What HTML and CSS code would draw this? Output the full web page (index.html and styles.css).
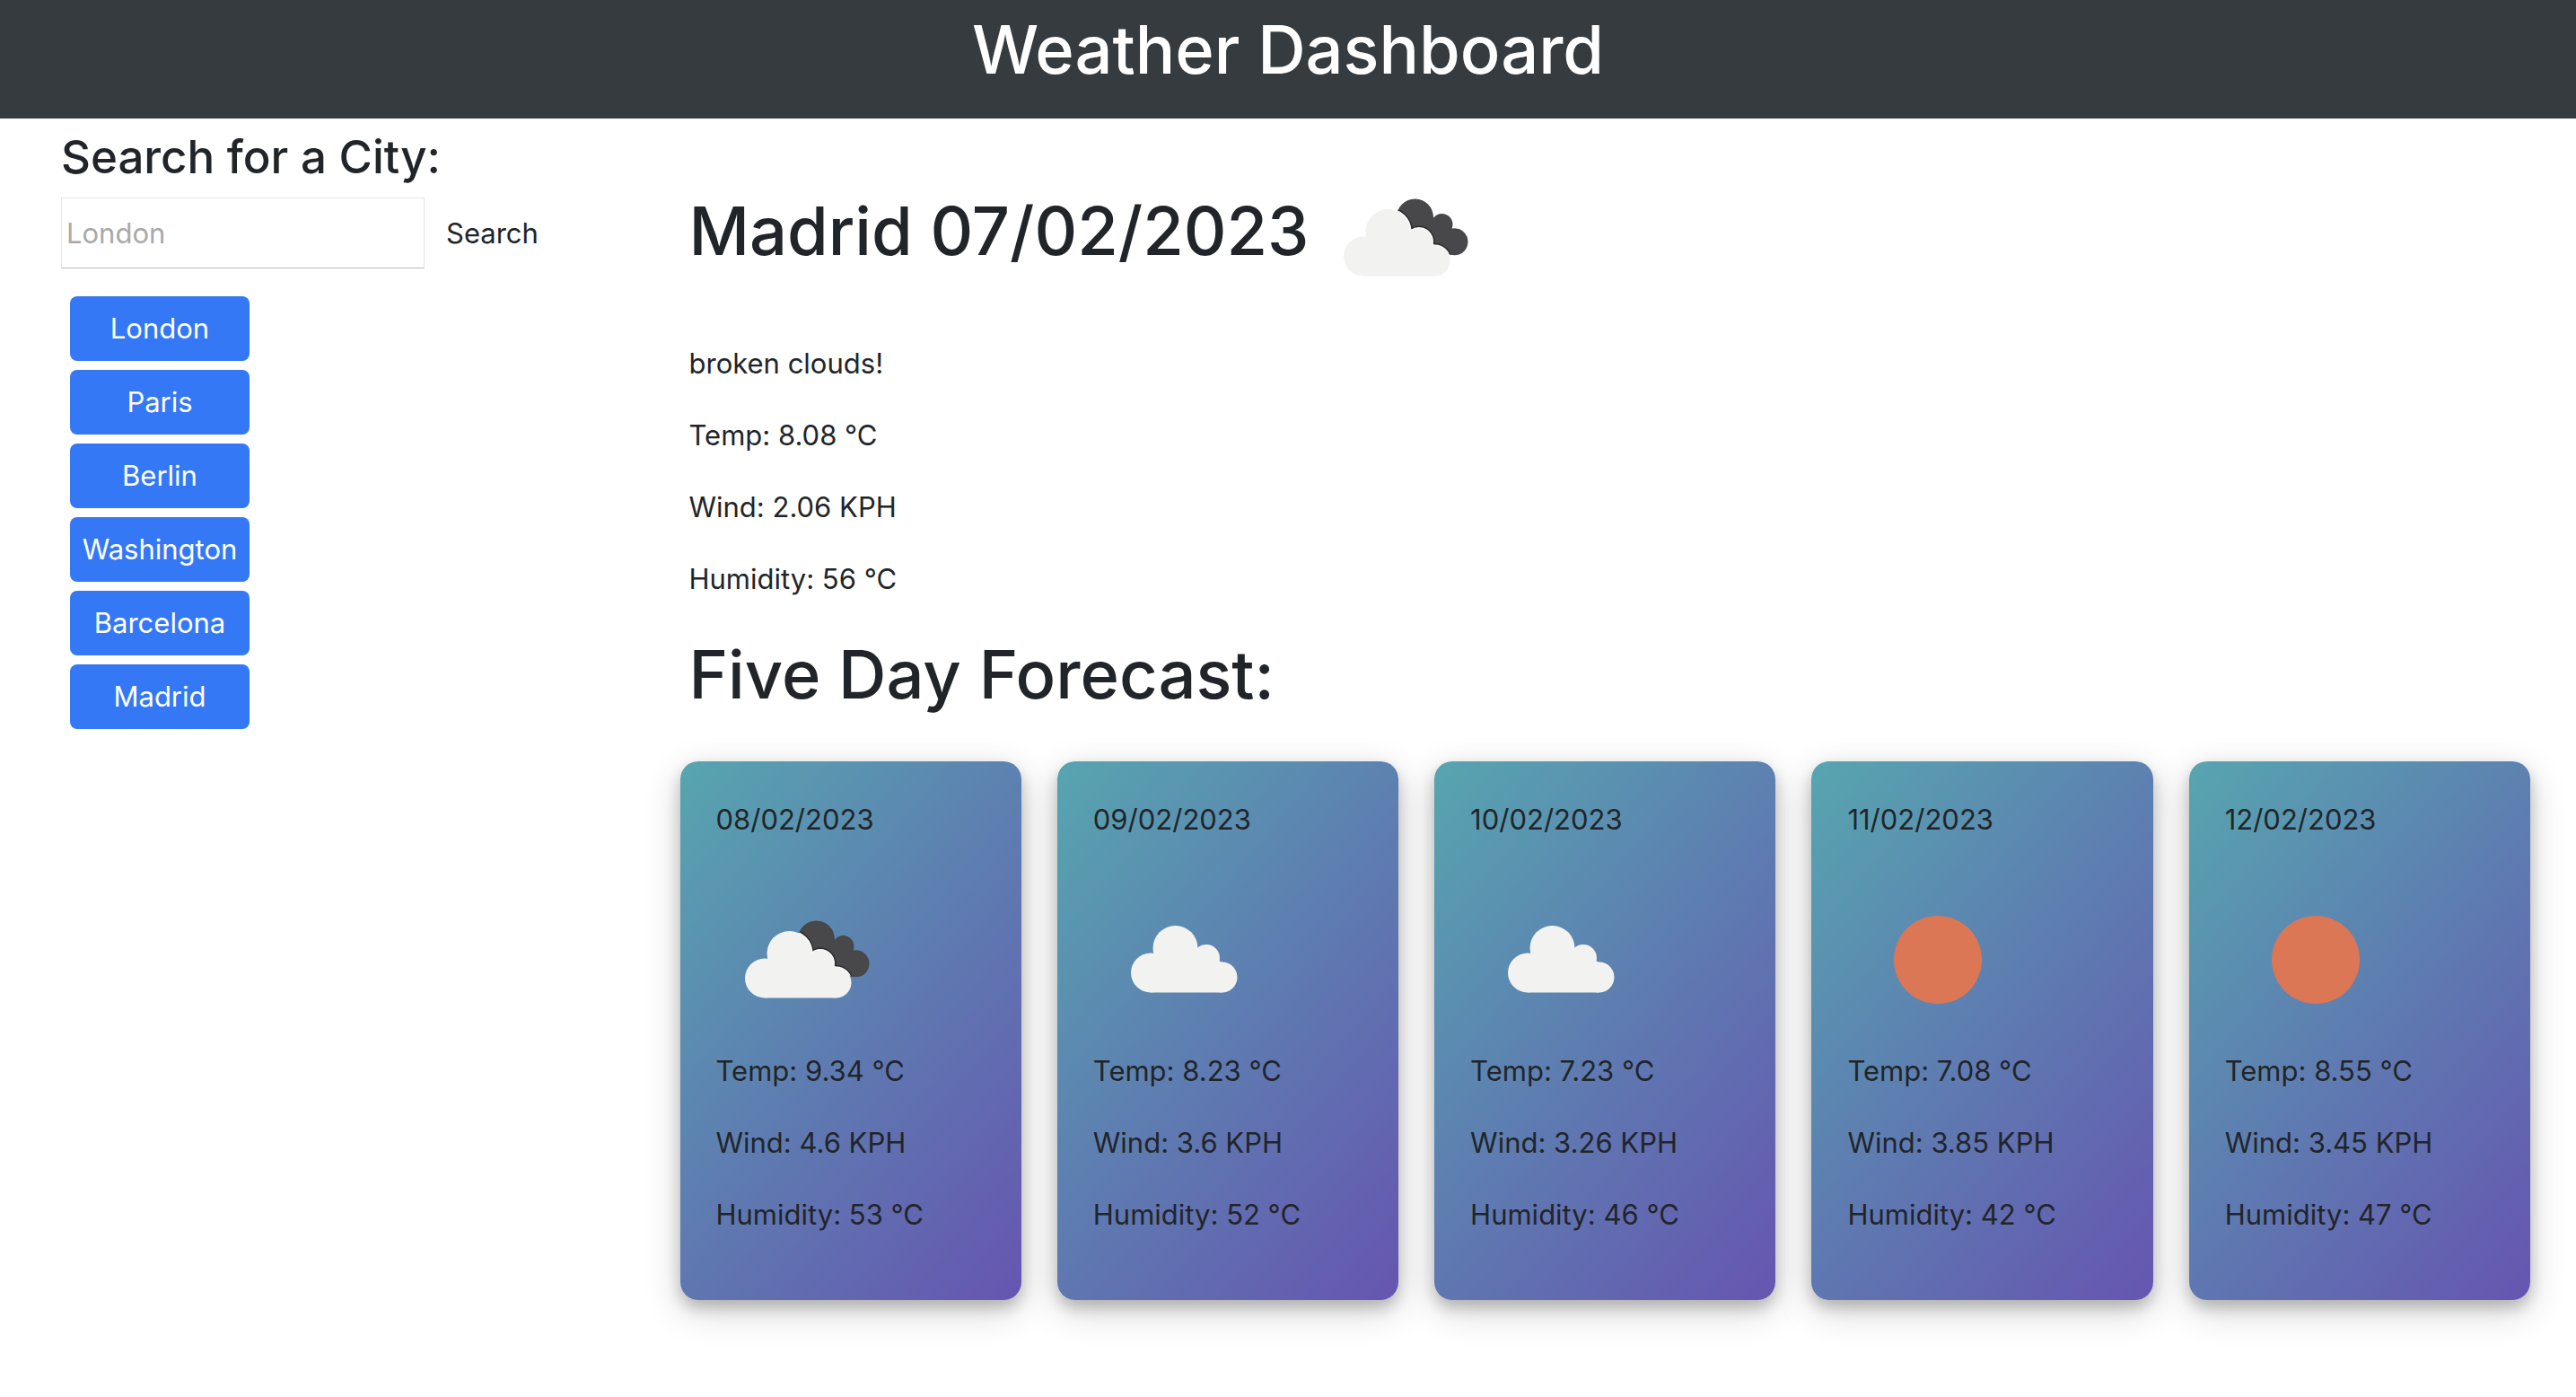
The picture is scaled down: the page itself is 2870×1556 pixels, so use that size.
FILE: index.html
```html
<!DOCTYPE html>
<html lang="en">
<head>
  <meta charset="utf-8">
  <title>Weather Dashboard</title>
  <meta name="viewport" content="width=device-width, initial-scale=1">
  <link rel="stylesheet" href="styles.css">
</head>
<body>
  <svg class="sprite" aria-hidden="true">
    <defs>
      <g id="cloud-shape">
        <circle cx="53" cy="121.5" r="22"/>
        <circle cx="80.5" cy="94" r="25"/>
        <circle cx="115" cy="105" r="15"/>
        <circle cx="132.5" cy="126.5" r="17"/>
        <path d="M53 143.500H132.500V110L104 94L80 90L57 100Z"/>
      </g>
      <clipPath id="back-clip">
        <circle cx="110.500" cy="78" r="20.500"/>
        <circle cx="140.500" cy="86" r="12"/>
        <circle cx="154.500" cy="105.300" r="15"/>
        <path d="M92 70L128 78L152 92L154 120L120 108Z"/>
      </clipPath>
      <symbol id="icon-broken" viewBox="-1 0 200 200">
        <g clip-path="url(#back-clip)">
          <rect width="200" height="200" fill="#48484a"/>
          <use href="#cloud-shape" fill="#2b2b2d" stroke="#2b2b2d" stroke-width="5"/>
          <use href="#cloud-shape" fill="#fff" stroke="#fff" stroke-width="2"/>
        </g>
        <use href="#cloud-shape" fill="#f2f2f0"/>
      </symbol>
      <symbol id="icon-cloud" viewBox="0 0 200 200">
        <use href="#cloud-shape" x="11" y="-6" fill="#f2f2f0"/>
      </symbol>
      <symbol id="icon-sun" viewBox="0 0 200 200">
        <circle cx="101" cy="101" r="49" fill="#dc7755"/>
      </symbol>
    </defs>
  </svg>

  <header class="header">
    <h1 class="title">Weather Dashboard</h1>
  </header>

  <main class="layout">
    <aside class="sidebar">
      <form class="search">
        <h2 class="search-title"><label for="city">Search for a City:</label></h2>
        <div class="search-row">
          <input class="search-input" id="city" type="text" placeholder="London">
          <button class="search-button" type="button">Search</button>
        </div>
      </form>
      <div class="history">
        <button class="city" type="button">London</button>
        <button class="city" type="button">Paris</button>
        <button class="city" type="button">Berlin</button>
        <button class="city" type="button">Washington</button>
        <button class="city" type="button">Barcelona</button>
        <button class="city" type="button">Madrid</button>
      </div>
    </aside>

    <div class="content">
      <section class="today">
        <h2 class="heading today-heading">Madrid 07/02/2023<svg class="icon" role="img" aria-label="Broken clouds"><use href="#icon-broken"/></svg></h2>
        <p>broken clouds!</p>
        <p>Temp: 8.08 °C</p>
        <p>Wind: 2.06 KPH</p>
        <p>Humidity: 56 °C</p>
        <h2 class="heading">Five Day Forecast:</h2>
      </section>
      <section class="forecast">
        <article class="card">
          <p>08/02/2023</p>
          <svg class="icon" role="img" aria-label="Broken clouds"><use href="#icon-broken"/></svg>
          <p>Temp: 9.34 °C</p>
          <p>Wind: 4.6 KPH</p>
          <p>Humidity: 53 °C</p>
        </article>
        <article class="card">
          <p>09/02/2023</p>
          <svg class="icon" role="img" aria-label="Clouds"><use href="#icon-cloud"/></svg>
          <p>Temp: 8.23 °C</p>
          <p>Wind: 3.6 KPH</p>
          <p>Humidity: 52 °C</p>
        </article>
        <article class="card">
          <p>10/02/2023</p>
          <svg class="icon" role="img" aria-label="Clouds"><use href="#icon-cloud"/></svg>
          <p>Temp: 7.23 °C</p>
          <p>Wind: 3.26 KPH</p>
          <p>Humidity: 46 °C</p>
        </article>
        <article class="card">
          <p>11/02/2023</p>
          <svg class="icon" role="img" aria-label="Clear sky"><use href="#icon-sun"/></svg>
          <p>Temp: 7.08 °C</p>
          <p>Wind: 3.85 KPH</p>
          <p>Humidity: 42 °C</p>
        </article>
        <article class="card">
          <p>12/02/2023</p>
          <svg class="icon" role="img" aria-label="Clear sky"><use href="#icon-sun"/></svg>
          <p>Temp: 8.55 °C</p>
          <p>Wind: 3.45 KPH</p>
          <p>Humidity: 47 °C</p>
        </article>
      </section>
    </div>
  </main>
</body>
</html>
```
FILE: styles.css
```css
* {
  box-sizing: border-box;
}

body {
  margin: 0;
  min-height: 100vh;
  background: #fff;
  color: #212529;
  font: 400 31px/50px Inter, "Liberation Sans", sans-serif;
}

h1, h2, p {
  margin: 0;
}

button, input {
  font: inherit;
  color: inherit;
}

.sprite {
  display: block;
  width: 0;
  height: 0;
}

.header {
  padding: 4px 0 26px;
  background: #363b3f;
  color: #fff;
  text-align: center;
}

.title,
.heading {
  font-size: 74px;
  line-height: 102px;
  font-weight: 500;
}

.layout {
  display: grid;
  grid-template-columns: 1fr 3fr;
}

.sidebar {
  padding: 8px 20px 0 68px;
}

.search-title {
  margin-bottom: 10px;
  font-size: 51px;
  line-height: 70px;
  font-weight: 500;
}

.search-row {
  display: flex;
  align-items: center;
}

.search-input {
  width: 405px;
  height: 79px;
  padding: 2px 5px;
  border: 1px solid #e6e6e6;
  border-bottom: 1px solid #b8b8b8;
  background: #fff;
}

.search-input::placeholder {
  color: #a9a9a9;
  opacity: 1;
}

.search-button {
  padding: 12px 24px;
  border: 0;
  background: none;
}

.history {
  display: grid;
  gap: 10px;
  width: 200px;
  margin: 31px 0 0 10px;
}

.city {
  height: 72px;
  padding: 0;
  border: 0;
  border-radius: 8px;
  background: #3478f6;
  color: #fff;
}

.content {
  padding: 32px 51px 108px 40px;
}

.today {
  padding: 0 10px;
}

.today p,
.card p {
  margin-bottom: 30px;
}

.today-heading {
  margin-bottom: 16px;
}

.icon {
  display: block;
  width: 200px;
  height: 200px;
}

.today-heading .icon {
  display: inline-block;
  margin-left: 6px;
  vertical-align: middle;
}

.forecast {
  display: grid;
  grid-template-columns: repeat(5, 1fr);
  gap: 40px;
  padding-top: 46px;
}

.card {
  padding: 40px;
  border-radius: 20px;
  background: linear-gradient(130deg, #57a5af, #5e7cb1, #6655b0);
  box-shadow: 0 8px 16px rgba(0, 0, 0, 0.2), 0 12px 40px rgba(0, 0, 0, 0.19);
}
```
